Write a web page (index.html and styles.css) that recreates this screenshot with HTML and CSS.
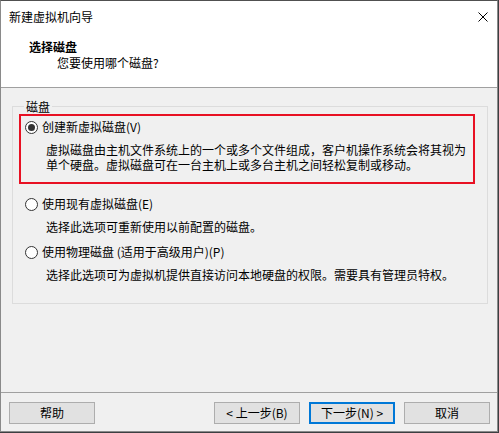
FILE: index.html
```html
<!DOCTYPE html>
<html lang="zh-CN">
<head>
<meta charset="utf-8">
<title>新建虚拟机向导</title>
<link rel="stylesheet" href="styles.css">
</head>
<body>
<div class="window">
  <div class="titlebar">
    <span class="title">新建虚拟机向导</span>
    <span class="close">
      <svg width="10" height="10" viewBox="0 0 10 10"><path d="M0.5 0.5 L9.5 9.5 M9.5 0.5 L0.5 9.5" stroke="#000" stroke-width="1" fill="none"/></svg>
    </span>
  </div>
  <div class="header">
    <div class="h-title">选择磁盘</div>
    <div class="h-sub">您要使用哪个磁盘?</div>
  </div>
  <div class="content">
    <fieldset class="group">
      <legend>磁盘</legend>
      <div class="opt opt-first">
        <div class="row"><span class="radio checked"></span><span class="label">创建新虚拟磁盘(V)</span></div>
        <div class="desc">
          <div class="line">虚拟磁盘由主机文件系统上的一个或多个文件组成，客户机操作系统会将其视为</div>
          <div class="line">单个硬盘。虚拟磁盘可在一台主机上或多台主机之间轻松复制或移动。</div>
        </div>
      </div>
      <div class="opt opt-second">
        <div class="row"><span class="radio"></span><span class="label">使用现有虚拟磁盘(E)</span></div>
        <div class="desc"><div class="line">选择此选项可重新使用以前配置的磁盘。</div></div>
      </div>
      <div class="opt opt-third">
        <div class="row"><span class="radio"></span><span class="label">使用物理磁盘 (适用于高级用户)(P)</span></div>
        <div class="desc"><div class="line">选择此选项可为虚拟机提供直接访问本地硬盘的权限。需要具有管理员特权。</div></div>
      </div>
    </fieldset>
  </div>
  <div class="footer">
    <button class="btn">帮助</button>
    <div class="spacer"></div>
    <button class="btn">&lt; 上一步(B)</button>
    <button class="btn primary">下一步(N) &gt;</button>
    <button class="btn">取消</button>
  </div>
</div>
</body>
</html>
```
FILE: styles.css
```css
* { box-sizing: border-box; }
html, body { margin: 0; padding: 0; }
body {
  background: #3c3f41;
  font-family: "Noto Sans CJK SC", "Microsoft YaHei", sans-serif;
  font-size: 12px;
  color: #000;
  width: 499px;
  height: 433px;
  overflow: hidden;
}
.window {
  width: 498px;
  height: 432px;
  border: 1px solid #8a8a8a;
  border-top-color: #505050;
  background: #f0f0f0;
  display: flex;
  flex-direction: column;
}
.titlebar {
  height: 30px;
  background: #fff;
  display: flex;
  align-items: center;
  padding: 0 8px 0 8px;
  line-height: 16px;
}
.title { flex: 1; padding-top: 1px; }
.close { display: flex; width: 10px; height: 10px; margin-right: 1px; margin-top: 2px; }
.header {
  height: 57px;
  background: #fff;
  border-bottom: 1px solid #a0a0a0;
  padding: 8px 0 0 28px;
  line-height: 16px;
}
.h-title { font-weight: bold; }
.h-sub { padding-left: 28px; }
.content {
  height: 305px;
  border-bottom: 1px solid #a0a0a0;
  padding: 11px 9px 0 11px;
}
.group {
  margin: 0;
  border: 1px solid #dcdcdc;
  padding: 0 12px 0 6px;
  height: 205px;
  min-width: 0;
}
.group legend {
  padding: 0 2px;
  margin-left: 5px;
  line-height: 15px;
}
.opt { padding-left: 6px; }
.opt-first {
  border: 2px solid #e81123;
  padding: 3px 0 10px 4px;
}
.opt-second { margin-top: 12px; }
.opt-third { margin-top: 10px; }
.row {
  display: flex;
  align-items: center;
  height: 16px;
  line-height: 16px;
}
.radio {
  width: 13px;
  height: 13px;
  border: 1px solid #333;
  border-radius: 50%;
  background: #fff;
  margin-right: 4px;
  display: flex;
  align-items: center;
  justify-content: center;
  flex: none;
}
.radio.checked::after {
  content: "";
  width: 7px;
  height: 7px;
  border-radius: 50%;
  background: #333;
}
.desc {
  margin-top: 7px;
  padding-left: 21px;
}
.line {
  height: 15px;
  line-height: 15px;
  white-space: nowrap;
}
.footer {
  flex: 1;
  display: flex;
  align-items: flex-start;
  padding: 9px 7px 0 8px;
  gap: 9px;
}
.spacer { flex: 1; }
.btn {
  width: 86px;
  height: 22px;
  background: #e1e1e1;
  border: 1px solid #adadad;
  font-family: inherit;
  font-size: 12px;
  color: #000;
  padding: 0;
  line-height: 18px;
}
.btn.primary { border: 2px solid #0078d7; }
```
